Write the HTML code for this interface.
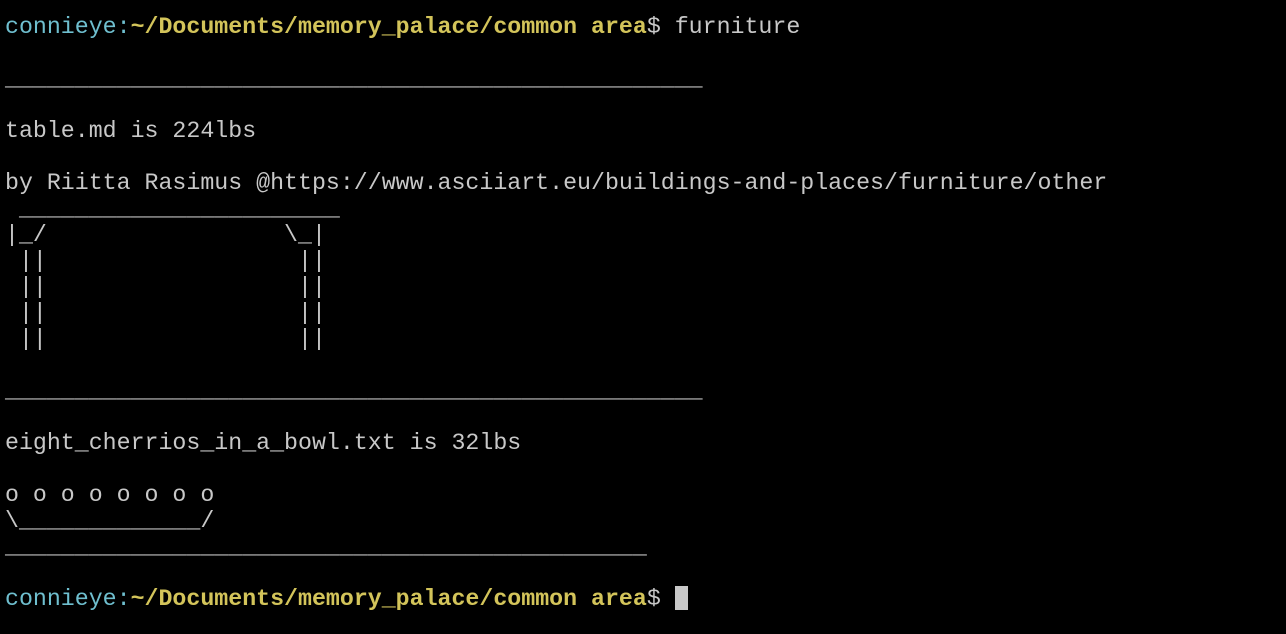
<!DOCTYPE html>
<html><head><meta charset="utf-8"><style>
html,body{margin:0;padding:0;background:#000;width:1286px;height:634px;overflow:hidden}
pre{margin:0;position:absolute;left:5px;top:14px;font-family:"Liberation Mono",monospace;font-size:23.25px;line-height:26px;color:#c8c8c8;white-space:pre}
.c{color:#6fbfcf}.y{color:#d3c45a;font-weight:bold}
.cur{display:inline-block;width:13px;height:24px;background:#c8c8c8;vertical-align:-5px}
</style></head><body><pre><span class="c">connieye:</span><span class="y">~/Documents/memory_palace/common area</span>$ furniture

__________________________________________________

table.md is 224lbs

by Riitta Rasimus @https://www.asciiart.eu/buildings-and-places/furniture/other
 _______________________
|_/                 \_|
 ||                  ||
 ||                  ||
 ||                  ||
 ||                  ||

__________________________________________________

eight_cherrios_in_a_bowl.txt is 32lbs

o o o o o o o o
\_____________/
______________________________________________

<span class="c">connieye:</span><span class="y">~/Documents/memory_palace/common area</span>$ <span class="cur"></span></pre></body></html>
